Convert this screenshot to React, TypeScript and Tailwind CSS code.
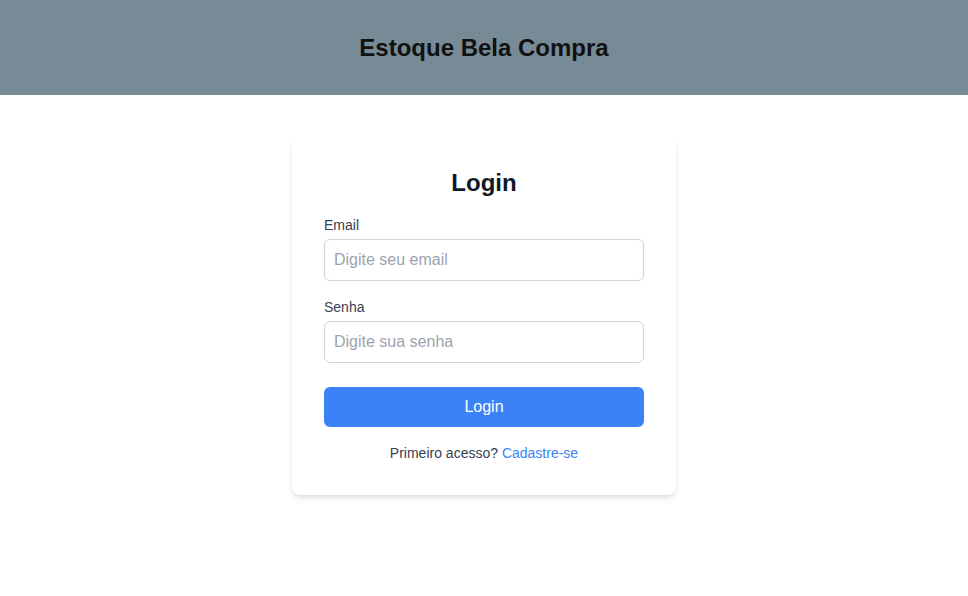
export default function App() {
  return (
    <div className="min-h-screen bg-white font-['Liberation_Sans',Arial,sans-serif]">
      <header className="flex h-[95px] items-center justify-center bg-[#778b96]">
        <h1 className="text-2xl font-bold text-[#111]">Estoque Bela Compra</h1>
      </header>
      <main className="flex justify-center">
        <div className="mt-[42px] w-96 rounded-lg bg-white p-8 shadow-md">
          <h2 className="mb-[18px] text-center text-2xl leading-7 font-bold text-[#111827]">Login</h2>
          <form onSubmit={(e) => e.preventDefault()}>
            <label className="mb-1 block text-sm text-[#374151]">Email</label>
            <input
              type="email"
              placeholder="Digite seu email"
              className="mb-4 block h-[42px] w-full rounded-md border border-[#d1d5db] px-[9px] text-base text-[#111827] placeholder:text-[#9ca3af] outline-none"
            />
            <label className="mb-1 block text-sm text-[#374151]">Senha</label>
            <input
              type="password"
              placeholder="Digite sua senha"
              className="block h-[42px] w-full rounded-md border border-[#d1d5db] px-[9px] text-base text-[#111827] placeholder:text-[#9ca3af] outline-none"
            />
            <button
              type="submit"
              className="mt-6 h-10 w-full rounded-md bg-[#3b82f6] text-base text-white"
            >
              Login
            </button>
          </form>
          <p className="mt-4 text-center text-sm text-[#374151]">
            Primeiro acesso? <a href="#" className="text-[#3b82f6]">Cadastre-se</a>
          </p>
        </div>
      </main>
    </div>
  );
}
